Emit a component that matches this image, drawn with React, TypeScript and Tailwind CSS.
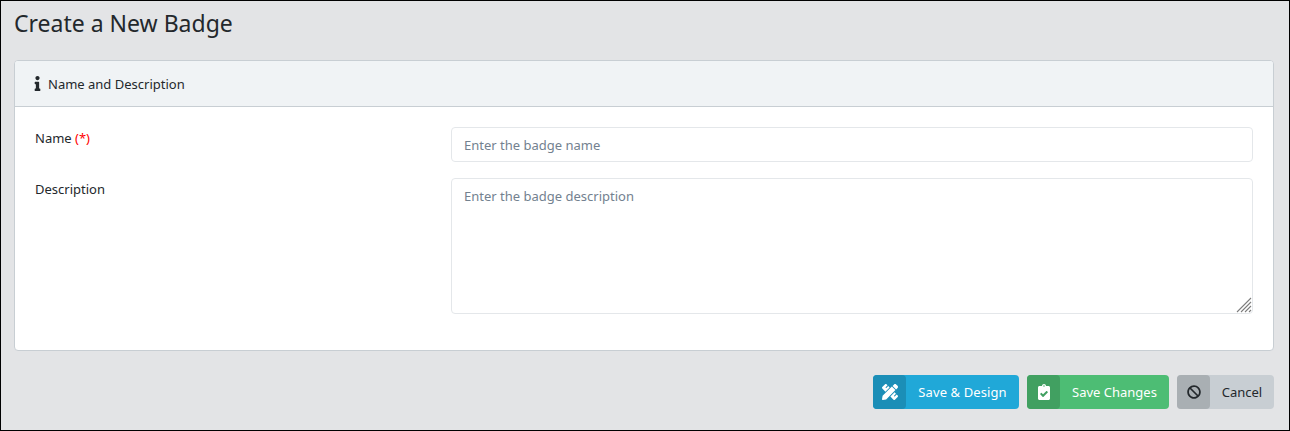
import { FaInfo, FaPencilRuler, FaClipboardCheck, FaBan } from "react-icons/fa";

export default function App() {
  return (
    <div className="h-[431px] w-[1290px] overflow-hidden border border-black bg-[#e3e4e6] pl-[13px] pr-[15px] font-['Noto_Sans',sans-serif] text-[#23282c]">
      <h1 className="h-[59px] pt-[6px] text-[23px] leading-[33px]">Create a New Badge</h1>
      <div className="h-[291px] overflow-hidden rounded-[4px] border border-[#c8ced3] bg-white">
        <div className="flex h-[46px] items-center border-b border-[#c8ced3] bg-[#f0f3f5] pl-[19px] text-[13px]">
          <FaInfo className="mr-[7px] h-[15px] w-[7px]" />
          <span className="pt-[2px]">Name and Description</span>
        </div>
        <div className="flex flex-col gap-[16px] px-[20px] pt-[20px]">
          <div className="flex">
            <label className="w-[416px] text-[13px] leading-[22px]">
              Name <span className="text-[#ff0000]">(*)</span>
            </label>
            <input
              className="h-[35px] flex-1 rounded-[4px] border border-[#e4e7ea] px-[12px] text-[13px] outline-none placeholder:text-[#73818f]"
              placeholder="Enter the badge name"
            />
          </div>
          <div className="flex">
            <label className="w-[416px] text-[13px] leading-[22px]">Description</label>
            <div className="relative h-[136px] flex-1">
              <textarea
                className="block h-full w-full resize-none rounded-[4px] border border-[#e4e7ea] px-[12px] pb-[7px] pt-[8px] text-[13px] outline-none placeholder:text-[#73818f]"
                placeholder="Enter the badge description"
              />
              <svg className="pointer-events-none absolute bottom-[1px] right-[1px]" width="16" height="16" viewBox="0 0 16 16">
                <g stroke="#7d7d7d" strokeWidth="1.1" fill="none">
                  <path d="M1 15 15 1" />
                  <path d="M5 15 15 5" />
                  <path d="M9 15 15 9" />
                  <path d="M13 15 15 13" />
                </g>
              </svg>
            </div>
          </div>
        </div>
      </div>
      <div className="mt-[24px] flex justify-end gap-[8px] text-[13px]">
        <button className="flex h-[34px] w-[146px] items-center rounded-[4px] bg-[#20a8d8] text-white">
          <span className="flex h-full w-[33px] items-center justify-center rounded-[4px] bg-[#1b8eb7]">
            <FaPencilRuler className="h-[16px] w-[16px]" />
          </span>
          <span className="flex-1 pt-[2px] text-center tracking-[0.1px]">Save &amp; Design</span>
        </button>
        <button className="flex h-[34px] w-[142px] items-center rounded-[4px] bg-[#4dbd74] text-white">
          <span className="flex h-full w-[33px] items-center justify-center rounded-[4px] bg-[#41a061]">
            <FaClipboardCheck className="h-[16px] w-[12px]" />
          </span>
          <span className="flex-1 pt-[2px] text-center">Save Changes</span>
        </button>
        <button className="flex h-[34px] w-[97px] items-center rounded-[4px] bg-[#c8ced3] text-[#23282c]">
          <span className="flex h-full w-[33px] items-center justify-center rounded-[4px] bg-[#a9afb3]">
            <FaBan className="h-[14px] w-[14px]" />
          </span>
          <span className="flex-1 pt-[2px] text-center">Cancel</span>
        </button>
      </div>
    </div>
  );
}
